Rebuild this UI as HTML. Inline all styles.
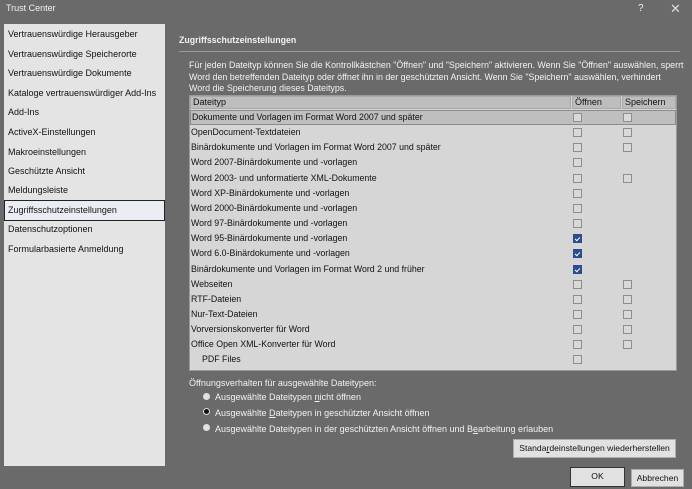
<!DOCTYPE html>
<html><head><meta charset="utf-8"><style>
*{margin:0;padding:0;box-sizing:border-box}
body{width:692px;height:489px;background:#6a6a6a;font-family:"Liberation Sans",sans-serif;font-size:9px;color:#111;position:relative;overflow:hidden}
.a{position:absolute;white-space:nowrap}
.w{color:#f2f2f2}
.left{position:absolute;left:4px;top:24px;width:161px;height:442px;background:#e4e4e4}
.li{position:absolute;left:8px}
.sel{position:absolute;left:4px;top:200px;width:161px;height:21px;background:#eaeef4;border:1.5px solid #222}
.tbl{position:absolute;left:189px;top:95px;width:488px;height:276px;background:#d6d6d6;border:1px solid #9a9a9a}
.hd{position:absolute;top:96px;height:13px;background:#bdbdbd;border:1px solid #a8a8a8;line-height:11px;padding-left:2px}
.row{position:absolute;left:190px;width:486px;height:15px;line-height:15px;padding-left:1px;font-size:8.8px}
.cb{position:absolute;width:9px;height:9px;border:1px solid #8e8e8e;background:#d9d9d9}
.ck{background:#2a4d8d;border-color:#2a4d8d}
.ck:after{content:"";position:absolute;left:2px;top:1px;width:2px;height:4px;border:solid #fff;border-width:0 1.2px 1.2px 0;transform:rotate(45deg)}
.rad{position:absolute;width:7px;height:7px;border-radius:50%;background:#e0e0e0}
.btn{position:absolute;background:#e1e1e1;border:1px solid #adadad;text-align:center;color:#111;font-size:8.6px}
</style></head><body>
<div class="a w" style="left:6px;top:3px;font-size:9px">Trust Center</div>
<div class="a w" style="left:638px;top:3px;font-size:10px">?</div>
<div class="a" style="left:670px;top:1px;font-size:13px;color:#ddd">✕</div>

<div class="left"></div>
<div class="sel"></div>
<div class="a li" style="top:29px">Vertrauenswürdige Herausgeber</div>
<div class="a li" style="top:49px">Vertrauenswürdige Speicherorte</div>
<div class="a li" style="top:68px">Vertrauenswürdige Dokumente</div>
<div class="a li" style="top:88px">Kataloge vertrauenswürdiger Add-Ins</div>
<div class="a li" style="top:107px">Add-Ins</div>
<div class="a li" style="top:127px">ActiveX-Einstellungen</div>
<div class="a li" style="top:147px">Makroeinstellungen</div>
<div class="a li" style="top:166px">Geschützte Ansicht</div>
<div class="a li" style="top:185px">Meldungsleiste</div>
<div class="a li" style="top:205px">Zugriffsschutzeinstellungen</div>
<div class="a li" style="top:224px">Datenschutzoptionen</div>
<div class="a li" style="top:244px">Formularbasierte Anmeldung</div>

<div class="a w" style="left:179px;top:35px;font-weight:bold;font-size:8.8px">Zugriffsschutzeinstellungen</div>
<div class="a" style="left:179px;top:51px;width:501px;height:1px;background:#999"></div>
<div class="a w" style="left:189px;top:60px;line-height:11.5px;font-size:8.9px">Für jeden Dateityp können Sie die Kontrollkästchen "Öffnen" und "Speichern" aktivieren. Wenn Sie "Öffnen" auswählen, sperrt<br>Word den betreffenden Dateityp oder öffnet ihn in der geschützten Ansicht. Wenn Sie "Speichern" auswählen, verhindert<br>Word die Speicherung dieses Dateityps.</div>

<div class="tbl"></div>
<div class="hd" style="left:190px;width:381px">Dateityp</div>
<div class="hd" style="left:572px;width:49px">Öffnen</div>
<div class="hd" style="left:622px;width:54px">Speichern</div>

<div class="row" style="top:110px;background:#bfbfbf;border:1px solid #8c8c8c;line-height:13px">Dokumente und Vorlagen im Format Word 2007 und später</div>
<div class="row" style="top:125px">OpenDocument-Textdateien</div>
<div class="row" style="top:140px">Binärdokumente und Vorlagen im Format Word 2007 und später</div>
<div class="row" style="top:155px">Word 2007-Binärdokumente und -vorlagen</div>
<div class="row" style="top:171px">Word 2003- und unformatierte XML-Dokumente</div>
<div class="row" style="top:186px">Word XP-Binärdokumente und -vorlagen</div>
<div class="row" style="top:201px">Word 2000-Binärdokumente und -vorlagen</div>
<div class="row" style="top:216px">Word 97-Binärdokumente und -vorlagen</div>
<div class="row" style="top:231px">Word 95-Binärdokumente und -vorlagen</div>
<div class="row" style="top:246px">Word 6.0-Binärdokumente und -vorlagen</div>
<div class="row" style="top:262px">Binärdokumente und Vorlagen im Format Word 2 und früher</div>
<div class="row" style="top:277px">Webseiten</div>
<div class="row" style="top:292px">RTF-Dateien</div>
<div class="row" style="top:307px">Nur-Text-Dateien</div>
<div class="row" style="top:322px">Vorversionskonverter für Word</div>
<div class="row" style="top:337px">Office Open XML-Konverter für Word</div>
<div class="row" style="top:352px;padding-left:12px">PDF Files</div>

<div class="cb" style="left:573px;top:113px"></div><div class="cb" style="left:623px;top:113px"></div>
<div class="cb" style="left:573px;top:128px"></div><div class="cb" style="left:623px;top:128px"></div>
<div class="cb" style="left:573px;top:143px"></div><div class="cb" style="left:623px;top:143px"></div>
<div class="cb" style="left:573px;top:158px"></div>
<div class="cb" style="left:573px;top:174px"></div><div class="cb" style="left:623px;top:174px"></div>
<div class="cb" style="left:573px;top:189px"></div>
<div class="cb" style="left:573px;top:204px"></div>
<div class="cb" style="left:573px;top:219px"></div>
<div class="cb ck" style="left:573px;top:234px"></div>
<div class="cb ck" style="left:573px;top:249px"></div>
<div class="cb ck" style="left:573px;top:265px"></div>
<div class="cb" style="left:573px;top:280px"></div><div class="cb" style="left:623px;top:280px"></div>
<div class="cb" style="left:573px;top:295px"></div><div class="cb" style="left:623px;top:295px"></div>
<div class="cb" style="left:573px;top:310px"></div><div class="cb" style="left:623px;top:310px"></div>
<div class="cb" style="left:573px;top:325px"></div><div class="cb" style="left:623px;top:325px"></div>
<div class="cb" style="left:573px;top:340px"></div><div class="cb" style="left:623px;top:340px"></div>
<div class="cb" style="left:573px;top:355px"></div>

<div class="a w" style="left:189px;top:378px">Öffnungsverhalten für ausgewählte Dateitypen:</div>
<div class="rad" style="left:203px;top:393px"></div>
<div class="a w" style="left:215px;top:392px">Ausgewählte Dateitypen <u>n</u>icht öffnen</div>
<div class="rad" style="left:203px;top:408px;border:1.5px solid #e0e0e0;background:#111"></div>
<div class="a w" style="left:215px;top:408px">Ausgewählte <u>D</u>ateitypen in geschützter Ansicht öffnen</div>
<div class="rad" style="left:203px;top:424px"></div>
<div class="a w" style="left:215px;top:424px">Ausgewählte Dateitypen in der geschützten Ansicht öffnen und B<u>e</u>arbeitung erlauben</div>

<div class="btn" style="left:513px;top:439px;width:163px;height:19px;line-height:17px">Standa<u>r</u>deinstellungen wiederherstellen</div>
<div class="btn" style="left:570px;top:467px;width:55px;height:20px;line-height:17px;border:1.5px solid #333">OK</div>
<div class="btn" style="left:631px;top:469px;width:53px;height:18px;line-height:16px">Abbrechen</div>
</body></html>
